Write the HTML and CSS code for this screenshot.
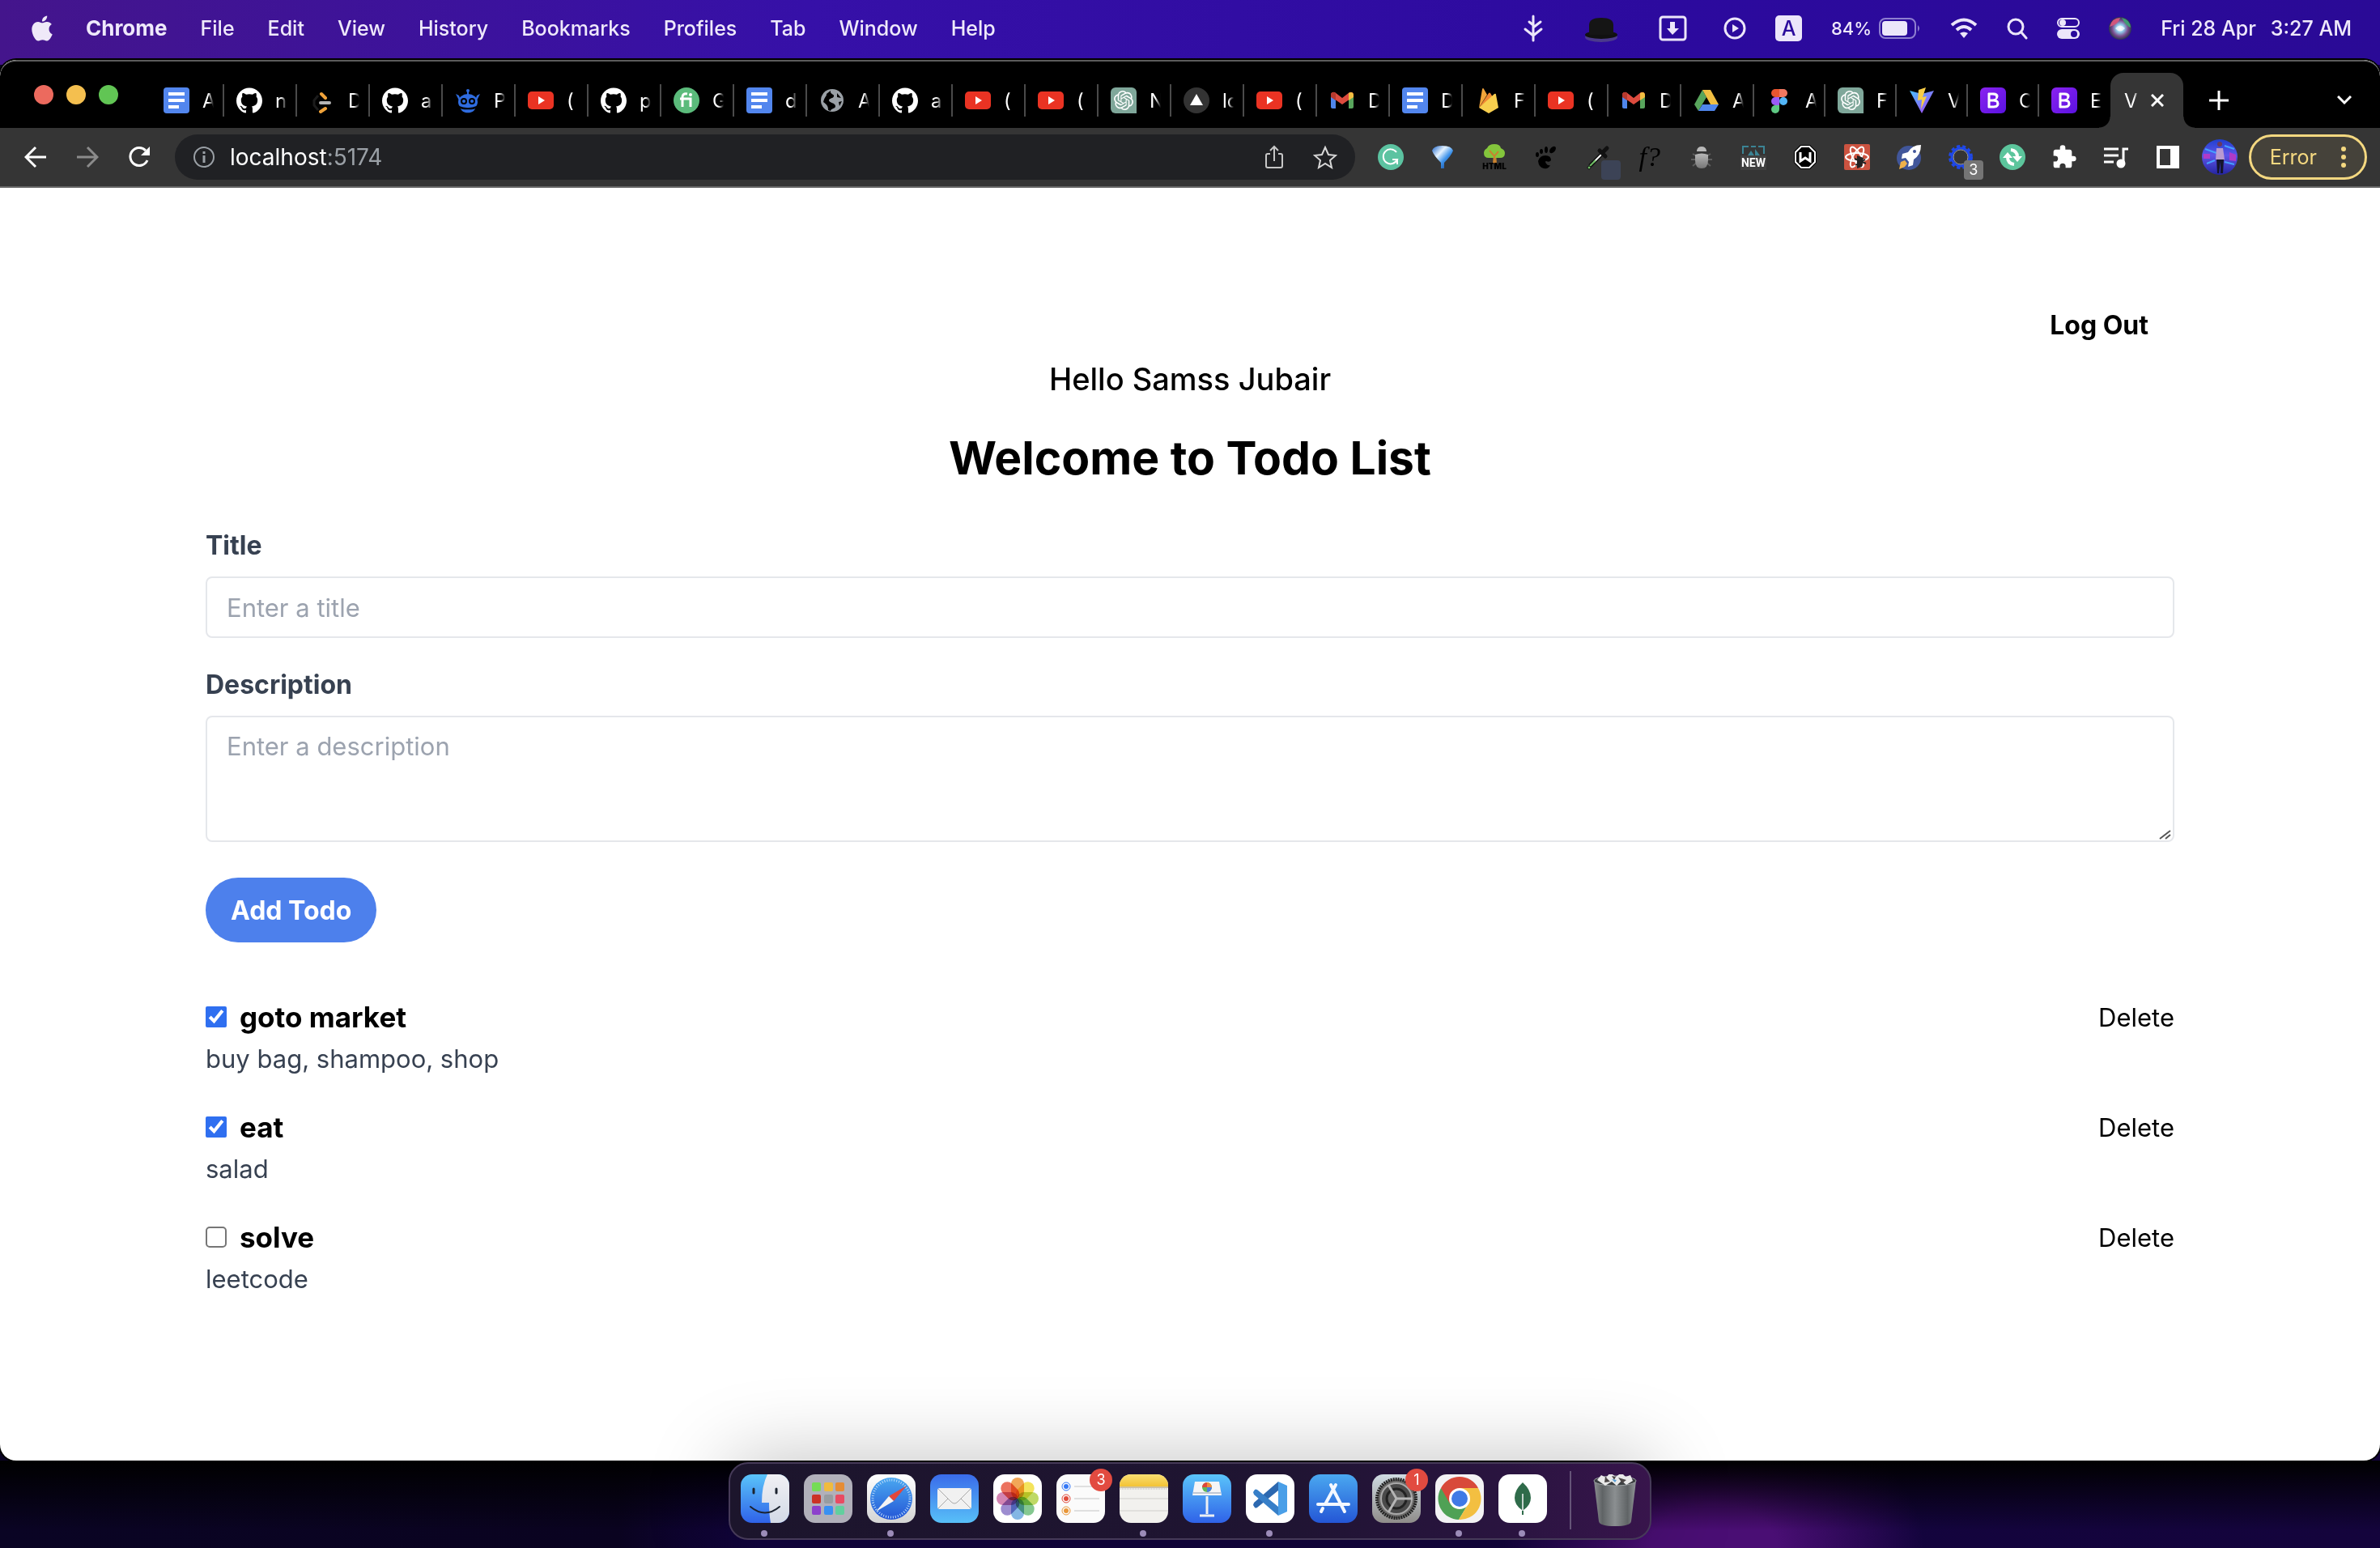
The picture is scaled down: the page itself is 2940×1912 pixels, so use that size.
FILE: index.html
```html
<!DOCTYPE html>
<html lang="en">
<head>
<meta charset="utf-8">
<title>Todo List</title>
<link rel="stylesheet" href="styles.css">
</head>
<body>
<svg class="sprite" aria-hidden="true">
  <defs>
    <linearGradient id="g-finder" x1="0" y1="0" x2="0" y2="1"><stop offset="0" stop-color="#5ac4fa"/><stop offset="1" stop-color="#2f62e8"/></linearGradient>
    <linearGradient id="g-blue" x1="0" y1="0" x2="0" y2="1"><stop offset="0" stop-color="#4aa8f0"/><stop offset="1" stop-color="#2456d6"/></linearGradient>
    <linearGradient id="g-mail" x1="0" y1="0" x2="0" y2="1"><stop offset="0" stop-color="#3a6bea"/><stop offset="1" stop-color="#58c0f8"/></linearGradient>
    <linearGradient id="g-silver" x1="0" y1="0" x2="0" y2="1"><stop offset="0" stop-color="#ffffff"/><stop offset="1" stop-color="#d4d4d4"/></linearGradient>
    <linearGradient id="g-face" x1="0" y1="0" x2="0" y2="1"><stop offset="0" stop-color="#f0f0f4"/><stop offset="1" stop-color="#d3dae6"/></linearGradient>
    <linearGradient id="g-yellow" x1="0" y1="0" x2="0" y2="1"><stop offset="0" stop-color="#f9de72"/><stop offset="1" stop-color="#f3c335"/></linearGradient>
    <linearGradient id="g-gear" x1="0" y1="0" x2="0" y2="1"><stop offset="0" stop-color="#cfdbe2"/><stop offset="1" stop-color="#8f8c8a"/></linearGradient>
    <linearGradient id="g-bin" x1="0" y1="0" x2="1" y2="0"><stop offset="0" stop-color="#8d9092"/><stop offset=".2" stop-color="#5f6365"/><stop offset=".5" stop-color="#8b8f91"/><stop offset=".8" stop-color="#606466"/><stop offset="1" stop-color="#93979a"/></linearGradient>
    <linearGradient id="g-boot" x1="0" y1="0" x2="1" y2="1"><stop offset="0" stop-color="#8a22f0"/><stop offset="1" stop-color="#5a12e0"/></linearGradient>
    <linearGradient id="g-vite" x1="0" y1="0" x2="1" y2="1"><stop offset="0" stop-color="#46c4ff"/><stop offset="1" stop-color="#b03cf6"/></linearGradient>
    <linearGradient id="g-balloon" x1="0" y1="0" x2="1" y2="1"><stop offset="0" stop-color="#1b63c8"/><stop offset=".35" stop-color="#e6f3ff"/><stop offset=".6" stop-color="#3d92ea"/><stop offset="1" stop-color="#0b2f78"/></linearGradient>
    <linearGradient id="g-bug" x1="0" y1="0" x2="0" y2="1"><stop offset="0" stop-color="#b8b8b8"/><stop offset="1" stop-color="#767676"/></linearGradient>
    <linearGradient id="g-avatar" x1="0" y1="0" x2="0" y2="1"><stop offset="0" stop-color="#1f3fd0"/><stop offset=".45" stop-color="#5e55e8"/><stop offset="1" stop-color="#2424a0"/></linearGradient>
    <radialGradient id="g-siri"><stop offset="0" stop-color="#ffffff"/><stop offset=".35" stop-color="#8fc9e8"/><stop offset=".7" stop-color="#7a4a8c"/><stop offset="1" stop-color="#2a3550"/></radialGradient>
  </defs>
  <symbol id="docs" viewBox="0 0 32 32"><rect width="32" height="32" rx="4" fill="#5286ee"/><path d="M6 6h20v4H6zM6 14h20v4H6zM6 22h13v4H6z" fill="#fff"/></symbol>
  <symbol id="github" viewBox="0 0 24 24"><path fill="#fff" d="M12 .297c-6.63 0-12 5.373-12 12 0 5.303 3.438 9.8 8.205 11.385.6.113.82-.258.82-.577 0-.285-.01-1.04-.015-2.04-3.338.724-4.042-1.61-4.042-1.61C4.422 18.07 3.633 17.7 3.633 17.7c-1.087-.744.084-.729.084-.729 1.205.084 1.838 1.236 1.838 1.236 1.07 1.835 2.809 1.305 3.495.998.108-.776.417-1.305.76-1.605-2.665-.3-5.466-1.332-5.466-5.93 0-1.31.465-2.38 1.235-3.22-.135-.303-.54-1.523.105-3.176 0 0 1.005-.322 3.3 1.23.96-.267 1.98-.399 3-.405 1.02.006 2.04.138 3 .405 2.28-1.552 3.285-1.23 3.285-1.23.645 1.653.24 2.873.12 3.176.765.84 1.23 1.91 1.23 3.22 0 4.61-2.805 5.625-5.475 5.92.42.36.81 1.096.81 2.22 0 1.606-.015 2.896-.015 3.286 0 .315.21.69.825.57C20.565 22.092 24 17.592 24 12.297c0-6.627-5.373-12-12-12"/></symbol>
  <symbol id="leetcode" viewBox="0 0 32 32"><path d="M15 8l5 5M14 30l6-4" stroke="#f0a33a" stroke-width="4" fill="none" stroke-linecap="round"/><path d="M11 10L6 16v6l5 6" stroke="#1c1c1c" stroke-width="3" fill="none"/><path d="M14 19h11" stroke="#b4b4b4" stroke-width="4" stroke-linecap="round"/></symbol>
  <symbol id="robot" viewBox="0 0 32 32"><g fill="#2f6ce0"><circle cx="16" cy="4" r="2"/><path d="M15 4h2v6h-2zM1 8l4 2 2 6H5zM31 8l-4 2-2 6h2z"/><ellipse cx="16" cy="18" rx="12" ry="10"/><path d="M7 26c4 2 14 2 18 0-2 7-16 7-18 0z"/></g><path d="M5 24c6 3 16 3 22 0" stroke="#000" stroke-width="2" fill="none"/><circle cx="11" cy="17" r="4"/><circle cx="21" cy="17" r="4"/><circle cx="11" cy="17" r="2" fill="#2f6ce0"/><circle cx="21" cy="17" r="2" fill="#2f6ce0"/></symbol>
  <symbol id="youtube" viewBox="0 0 32 32"><rect y="5" width="32" height="22" rx="5" fill="#ea3323"/><path d="M13 11l8 5-8 5z" fill="#fff"/></symbol>
  <symbol id="fi" viewBox="0 0 32 32"><circle cx="16" cy="16" r="16" fill="#5bbb7b"/><path d="M11 24V12q0-5 6-4M8 14h13v10" fill="none" stroke="#fff" stroke-width="3"/><circle cx="21" cy="9" r="2" fill="#fff"/></symbol>
  <symbol id="globe" viewBox="0 0 32 32"><circle cx="16" cy="16" r="14" fill="#9aa0a6"/><path d="M14 4c-1 5 5 4 4 7s-6 2-6 5 8 3 8 7-5 2-6 6l-3-1c0-5-1-6-6-10 2-8 4-6 4-10zM22 7l5 6-5-1zM24 18l4-1-3 6z" fill="#000"/></symbol>
  <symbol id="gpt" viewBox="0 0 32 32"><path d="M6 0h20a6 6 0 0 1 6 6v26H6a6 6 0 0 1-6-6V6a6 6 0 0 1 6-6z" fill="#7fa79a"/><path transform="translate(4 4)" fill="#fff" d="M22.2819 9.8211a5.9847 5.9847 0 0 0-.5157-4.9108 6.0462 6.0462 0 0 0-6.5098-2.9A6.0651 6.0651 0 0 0 4.9807 4.1818a5.9847 5.9847 0 0 0-3.9977 2.9 6.0462 6.0462 0 0 0 .7427 7.0966 5.98 5.98 0 0 0 .511 4.9107 6.051 6.051 0 0 0 6.5146 2.9001A5.9847 5.9847 0 0 0 13.2599 24a6.0557 6.0557 0 0 0 5.7718-4.2058 5.9894 5.9894 0 0 0 3.9977-2.9001 6.0557 6.0557 0 0 0-.7475-7.0729zm-9.022 12.6081a4.4755 4.4755 0 0 1-2.8764-1.0408l.1419-.0804 4.7783-2.7582a.7948.7948 0 0 0 .3927-.6813v-6.7369l2.02 1.1686a.071.071 0 0 1 .038.052v5.5826a4.504 4.504 0 0 1-4.4945 4.4944zm-9.6607-4.1254a4.4708 4.4708 0 0 1-.5346-3.0137l.142.0852 4.783 2.7582a.7712.7712 0 0 0 .7806 0l5.8428-3.3685v2.3324a.0804.0804 0 0 1-.0332.0615L9.74 19.9502a4.4992 4.4992 0 0 1-6.1408-1.6464zM2.3408 7.8956a4.485 4.485 0 0 1 2.3655-1.9728V11.6a.7664.7664 0 0 0 .3879.6765l5.8144 3.3543-2.0201 1.1685a.0757.0757 0 0 1-.071 0l-4.8303-2.7865A4.504 4.504 0 0 1 2.3408 7.872zm16.5963 3.8558L13.1038 8.364 15.1192 7.2a.0757.0757 0 0 1 .071 0l4.8303 2.7913a4.4944 4.4944 0 0 1-.6765 8.1042v-5.6772a.79.79 0 0 0-.407-.667zm2.0107-3.0231l-.142-.0852-4.7735-2.7818a.7759.7759 0 0 0-.7854 0L9.409 9.2297V6.8974a.0662.0662 0 0 1 .0284-.0615l4.8303-2.7866a4.4992 4.4992 0 0 1 6.6802 4.66zM8.3065 12.863l-2.02-1.1638a.0804.0804 0 0 1-.038-.0567V6.0742a4.4992 4.4992 0 0 1 7.3757-3.4537l-.142.0805L8.704 5.459a.7948.7948 0 0 0-.3927.6813zm1.0976-2.3654l2.602-1.4998 2.6069 1.4998v2.9994l-2.5974 1.4997-2.6067-1.4997Z"/></symbol>
  <symbol id="vercel" viewBox="0 0 32 32"><circle cx="16" cy="16" r="16" fill="#333"/><path d="M16 8l8 14H8z" fill="#fff"/></symbol>
  <symbol id="gmail" viewBox="0 0 32 32"><path d="M2 8v16q0 2 2 2h4V12z" fill="#4f86ec"/><path d="M30 8v16q0 2-2 2h-4V12z" fill="#58a55c"/><path d="M2 8q1-3 5-2l9 7 9-7q4-1 5 2l-1 4-13 9L3 12z" fill="#dd4b3e"/><path d="M24 7q5-3 6 2v3l-6 4z" fill="#f1bf42"/><path d="M8 7Q3 4 2 9v3l6 4z" fill="#b6392e"/></symbol>
  <symbol id="firebase" viewBox="0 0 32 32"><path d="M5 25L9 2q1-2 2 0l4 7z" fill="#f2a53a"/><path d="M5 25L17 7q1-1 2 0l3 5z" fill="#ef8733"/><path d="M5 25L24 8q2-1 2 1l3 16-12 7z" fill="#f8cf4e"/></symbol>
  <symbol id="drive" viewBox="0 0 32 32"><path d="M11 3L1 21l5 8 10-17z" fill="#58a55c"/><path d="M11 3h10l10 18H21z" fill="#f1bf42"/><path d="M6 29l5-8h20l-5 8z" fill="#4f86ec"/></symbol>
  <symbol id="figma" viewBox="0 0 32 32"><path d="M16 2h-5a5 5 0 0 0 0 10h5z" fill="#e8552f"/><path d="M16 2h5a5 5 0 0 1 0 10h-5z" fill="#f07860"/><path d="M16 12h-5a5 5 0 0 0 0 10h5z" fill="#9a5cf6"/><circle cx="21" cy="17" r="5" fill="#53b6f8"/><path d="M16 22h-5a5 5 0 1 0 5 5z" fill="#5ec983"/></symbol>
  <symbol id="vite" viewBox="0 0 32 32"><path d="M1 4l15 28L31 4 16 8z" fill="url(#g-vite)"/><path d="M21 0l-9 3-1 13 5-1-1 12 7-16-5 1z" fill="#f8cd46"/></symbol>
  <symbol id="bootstrap" viewBox="0 0 32 32"><rect width="32" height="32" rx="6" fill="url(#g-boot)"/><path d="M10 7h7q5 0 5 4 0 3-3 4 4 1 4 5 0 5-6 5h-7zM12 9v6h4q4 0 4-3t-4-3zM12 17v6h5q4 0 4-3t-4-3z" fill="#fff" fill-rule="evenodd" stroke="#fff"/></symbol>
</svg>

<div class="desktop">
  <header class="menubar">
    <nav class="menus" aria-label="Application menu">
      <button class="menu apple" aria-label="Apple"><svg width="26" height="32" viewBox="2 0 20 24" fill="#efe9f8"><path d="M12.152 6.896c-.948 0-2.415-1.078-3.96-1.04-2.04.027-3.91 1.183-4.961 3.014-2.117 3.675-.546 9.103 1.519 12.09 1.013 1.454 2.208 3.09 3.792 3.039 1.52-.065 2.09-.987 3.935-.987 1.831 0 2.35.987 3.96.948 1.637-.026 2.676-1.48 3.676-2.948 1.156-1.688 1.636-3.325 1.662-3.415-.039-.013-3.182-1.221-3.22-4.857-.026-3.04 2.48-4.494 2.597-4.559-1.429-2.09-3.623-2.324-4.39-2.376-2-.156-3.675 1.09-4.61 1.09zM15.53 3.83c.843-1.012 1.4-2.427 1.245-3.83-1.207.052-2.662.805-3.532 1.818-.78.896-1.454 2.338-1.273 3.714 1.338.104 2.715-.688 3.559-1.701"/></svg></button>
      <button class="menu app">Chrome</button>
      <button class="menu">File</button>
      <button class="menu">Edit</button>
      <button class="menu">View</button>
      <button class="menu">History</button>
      <button class="menu">Bookmarks</button>
      <button class="menu">Profiles</button>
      <button class="menu">Tab</button>
      <button class="menu">Window</button>
      <button class="menu">Help</button>
    </nav>
    <div class="status">
      <svg width="26" height="34" viewBox="0 0 26 34" fill="none" stroke="#ece6fa" stroke-width="3" stroke-linecap="round"><path d="M13 2v30M13 16l9-7M13 13L8 9M13 26l10-8M13 26L3 18"/></svg>
      <svg width="70" height="36" viewBox="0 0 70 36"><ellipse cx="35" cy="29" rx="20" ry="6" fill="#4b3a8c"/><ellipse cx="35" cy="26" rx="20" ry="5" fill="#111"/><path d="M20 26V14q0-9 15-9t15 9v12z" fill="#151515"/></svg>
      <svg width="44" height="34" viewBox="0 0 44 34" fill="none" stroke="#ece6fa" stroke-width="3"><rect x="2" y="3" width="31" height="28" rx="3"/><path d="M17 9v9" stroke-width="6"/><path d="M10 17h15l-8 8z" fill="#ece6fa" stroke="none"/></svg>
      <svg width="28" height="28" viewBox="0 0 28 28" fill="none" stroke="#ece6fa" stroke-width="3"><circle cx="14" cy="14" r="12"/><path d="M11 9l8 5-8 5z" fill="#ece6fa" stroke="none"/></svg>
      <span class="input-source">A</span>
      <span class="battery">84%
        <svg width="52" height="26" viewBox="0 0 52 26"><rect x="1" y="1" width="44" height="24" rx="7" fill="none" stroke="#8f7fd0" stroke-width="2"/><rect x="4" y="4" width="31" height="18" rx="4" fill="#ece6fa"/><path d="M48 9q4 4 0 8z" fill="#8f7fd0"/></svg></span>
      <svg width="34" height="26" viewBox="0 0 34 26" fill="none" stroke="#ece6fa" stroke-width="4"><path d="M2 9q15-13 30 0M8 15q9-8 18 0"/><path d="M17 25l-5-6q5-3 10 0z" fill="#ece6fa" stroke="none"/></svg>
      <svg width="26" height="28" viewBox="0 0 26 28" fill="none" stroke="#ece6fa" stroke-width="3" stroke-linecap="round"><circle cx="11" cy="12" r="9"/><path d="M18 19l6 7"/></svg>
      <svg width="28" height="28" viewBox="0 0 28 28"><rect x="1" y="2" width="26" height="10" rx="5" fill="none" stroke="#ece6fa" stroke-width="2"/><circle cx="7" cy="7" r="4" fill="#ece6fa"/><rect y="15" width="28" height="12" rx="6" fill="#ece6fa"/><circle cx="21" cy="21" r="4" fill="#2a0a9c"/></svg>
      <svg width="28" height="28" viewBox="0 0 28 28"><circle cx="14" cy="14" r="14" fill="url(#g-siri)"/><path d="M1 12Q4 1 14 1q-2 8-13 11z" fill="#d0567c"/><path d="M16 1q10 2 11 12-6-2-11-12z" fill="#3f9c74"/><path d="M8 14q6-7 12 0-6 7-12 0z" fill="#fff" opacity=".7"/></svg>
      <time class="clock"><span>Fri 28 Apr</span><span>3:27 AM</span></time>
    </div>
  </header>

  <section class="window">
    <div class="tabstrip">
      <div class="lights"><button class="light close" aria-label="Close window"></button><button class="light minimise" aria-label="Minimise"></button><button class="light zoom" aria-label="Zoom"></button></div>
      <div class="tabs">
        <button class="tab"><svg><use href="#docs"/></svg><span>A</span></button>
        <button class="tab"><svg><use href="#github"/></svg><span>n</span></button>
        <button class="tab"><svg><use href="#leetcode"/></svg><span>D</span></button>
        <button class="tab"><svg><use href="#github"/></svg><span>a</span></button>
        <button class="tab"><svg><use href="#robot"/></svg><span>P</span></button>
        <button class="tab"><svg><use href="#youtube"/></svg><span>(</span></button>
        <button class="tab"><svg><use href="#github"/></svg><span>p</span></button>
        <button class="tab"><svg><use href="#fi"/></svg><span>G</span></button>
        <button class="tab"><svg><use href="#docs"/></svg><span>d</span></button>
        <button class="tab"><svg><use href="#globe"/></svg><span>A</span></button>
        <button class="tab"><svg><use href="#github"/></svg><span>a</span></button>
        <button class="tab"><svg><use href="#youtube"/></svg><span>(</span></button>
        <button class="tab"><svg><use href="#youtube"/></svg><span>(</span></button>
        <button class="tab"><svg><use href="#gpt"/></svg><span>N</span></button>
        <button class="tab"><svg><use href="#vercel"/></svg><span>lo</span></button>
        <button class="tab"><svg><use href="#youtube"/></svg><span>(</span></button>
        <button class="tab"><svg><use href="#gmail"/></svg><span>D</span></button>
        <button class="tab"><svg><use href="#docs"/></svg><span>D</span></button>
        <button class="tab"><svg><use href="#firebase"/></svg><span>F</span></button>
        <button class="tab"><svg><use href="#youtube"/></svg><span>(</span></button>
        <button class="tab"><svg><use href="#gmail"/></svg><span>D</span></button>
        <button class="tab"><svg><use href="#drive"/></svg><span>A</span></button>
        <button class="tab narrow"><svg><use href="#figma"/></svg><span>A</span></button>
        <button class="tab narrow"><svg><use href="#gpt"/></svg><span>F</span></button>
        <button class="tab narrow"><svg><use href="#vite"/></svg><span>V</span></button>
        <button class="tab narrow"><svg><use href="#bootstrap"/></svg><span>C</span></button>
        <button class="tab narrow last"><svg><use href="#bootstrap"/></svg><span>E</span></button>
        <button class="tab active"><span>V</span><svg viewBox="0 0 16 16" stroke="#fff" stroke-width="3"><path d="M1 1l14 14M15 1L1 15"/></svg></button>
      </div>
      <button class="strip-button" aria-label="New tab"><svg width="24" height="24" viewBox="0 0 24 24" stroke="#fff" stroke-width="3"><path d="M12 0v24M0 12h24"/></svg></button>
      <button class="strip-button search" aria-label="Search tabs"><svg width="18" height="12" viewBox="0 0 18 12" fill="none" stroke="#fff" stroke-width="3"><path d="M1 1l8 8 8-8"/></svg></button>
    </div>

    <div class="toolbar">
      <button class="tool" aria-label="Back"><svg width="28" height="28" viewBox="0 0 28 28" fill="none" stroke="#fff" stroke-width="3"><path d="M27 14H3M14 2L2 14l12 12"/></svg></button>
      <button class="tool" aria-label="Forward"><svg width="28" height="28" viewBox="0 0 28 28" fill="none" stroke="#8b8b8b" stroke-width="3"><path d="M1 14h24M14 2l12 12-12 12"/></svg></button>
      <button class="tool" aria-label="Reload"><svg width="28" height="28" viewBox="0 0 28 28" fill="none" stroke="#fff" stroke-width="3"><path d="M24 18a11 11 0 1 1-2-12"/><path d="M27 1v11H16z" fill="#fff" stroke="none"/></svg></button>
      <div class="omnibox">
        <svg width="28" height="28" viewBox="0 0 28 28" fill="none" stroke="#9aa0a6" stroke-width="2"><circle cx="14" cy="14" r="12"/><path d="M14 12v9M14 7v3" stroke-width="3"/></svg>
        <p class="url">localhost<span>:5174</span></p>
        <button class="page-action" aria-label="Share"><svg width="24" height="30" viewBox="0 0 24 30" fill="none" stroke="#c7c7c7" stroke-width="2"><path d="M7 11H4q-2 0-2 2v13q0 2 2 2h16q2 0 2-2V13q0-2-2-2h-3M12 20V2M7 7l5-5 5 5"/></svg></button>
        <button class="page-action" aria-label="Bookmark"><svg width="30" height="30" viewBox="0 0 30 30" fill="none" stroke="#d8d8d8" stroke-width="2"><path d="M15 3l4 9 9 1-7 6 2 9-8-5-8 5 2-9-7-6 9-1z"/></svg></button>
      </div>
      <div class="extensions">
        <button class="ext" aria-label="Grammarly"><svg viewBox="0 0 32 32"><circle cx="16" cy="16" r="16" fill="#5cc3a1"/><path d="M23 10a9 9 0 1 0 1 9h-6M24 19v6" fill="none" stroke="#fff" stroke-width="2"/></svg></button>
        <button class="ext" aria-label="Balloon"><svg viewBox="0 0 32 32"><path d="M3 8Q5 2 16 2t13 6q-2 6-11 15v7h-4v-7Q5 14 3 8z" fill="url(#g-balloon)"/></svg></button>
        <button class="ext" aria-label="HTML tree"><svg viewBox="0 0 32 32"><path d="M15 12h3l1 12h-5z" fill="#c9822f"/><path d="M3 11q0-4 4-6 2-5 9-5t8 5q5 2 5 6 0 6-6 6H9q-6 0-6-6z" fill="#84c63c"/><path d="M10 8l6 7 5-6M16 13v10" stroke="#c9822f" stroke-width="2" fill="none"/><text x="16" y="31" class="t-html">HTML</text></svg></button>
        <button class="ext" aria-label="Footprint"><svg viewBox="0 0 32 32"><ellipse cx="24" cy="7" rx="3" ry="5" transform="rotate(40 24 7)"/><ellipse cx="16" cy="7" rx="2" ry="4"/><ellipse cx="10" cy="9" rx="2" ry="3"/><ellipse cx="5" cy="13" rx="2" ry="3"/><path d="M6 21q2-7 9-7t7 6q-2 3-6 1-2 0 0 3t5 2q-2 5-8 4t-7-9z"/></svg></button>
        <button class="ext" aria-label="Color picker"><svg viewBox="0 0 32 32"><path d="M21 12L6 27" stroke="#111" stroke-width="5"/><path d="M21 12L11 22" stroke="#fff" stroke-width="2"/><path d="M13 20L6 27" stroke="#6dbf63" stroke-width="2"/><path d="M18 8l7 7M22 10l5-5" stroke="#111" stroke-width="5" stroke-linecap="round"/><circle cx="5" cy="29" r="2" fill="#6dbf63" stroke="#111"/></svg><span class="badge blank"></span></button>
        <button class="ext" aria-label="What font"><em class="t-font">f?</em></button>
        <button class="ext" aria-label="Bug"><svg viewBox="0 0 32 32"><path d="M5 12l5 3M3 19h6M5 27l5-4M27 12l-5 3M29 19h-6M27 27l-5-4" stroke="#5e5e5e" stroke-width="2"/><path d="M10 8q1-5 6-5t6 5v1H10z" fill="#b8b8b8"/><path d="M8 13q8-3 16 0v7q0 10-8 10T8 20z" fill="url(#g-bug)"/></svg></button>
        <button class="ext" aria-label="Screenshot"><svg viewBox="0 0 32 32"><path d="M3 12V3h7M13 3h6M22 3h7v9" fill="none" stroke="#3b8494" stroke-width="2"/><path d="M9 14l4-6 4 6zM18 14V6l6 8z" fill="#3b8494"/><rect y="14" width="32" height="18" fill="#404040"/><text x="16" y="28" class="t-new">NEW</text></svg></button>
        <button class="ext" aria-label="Wappalyzer"><svg viewBox="0 0 32 32"><path d="M10 1h12l8 8v14l-8 8H10l-8-8V9z" fill="#000"/><path d="M11 3h10l7 7v12l-7 7H11l-7-7V10z" fill="none" stroke="#fff" stroke-width="2"/><path d="M10 10v11l6-4 6 4V10" fill="none" stroke="#fff" stroke-width="3"/></svg></button>
        <button class="ext" aria-label="React tools"><svg viewBox="0 0 32 32"><rect width="32" height="32" rx="2" fill="#cc5340"/><g fill="none" stroke="#fff" stroke-width="2"><ellipse cx="16" cy="16" rx="14" ry="5"/><ellipse cx="16" cy="16" rx="14" ry="5" transform="rotate(60 16 16)"/><ellipse cx="16" cy="16" rx="14" ry="5" transform="rotate(120 16 16)"/></g><path d="M16 14l8 3-2 11-6 2z" fill="#222"/><path d="M13 18l14 6M14 26l12-7" stroke="#222" stroke-width="2"/></svg></button>
        <button class="ext" aria-label="Rocket"><svg viewBox="0 0 32 32"><circle cx="16" cy="17" r="15" fill="#41569a"/><path d="M31 1q-11 0-16 9l-7 2-1 6 5-1 4 5-1 6 6-2 1-7Q31 13 31 1z" fill="#fff"/><path d="M4 31l2-9 5-2 3 4-3 4z" fill="#efb14a"/><circle cx="23" cy="9" r="2" fill="#41569a"/></svg></button>
        <button class="ext" aria-label="Gear"><svg viewBox="0 0 32 32" fill="none"><circle cx="16" cy="16" r="13" stroke="#1f48e8" stroke-width="4" stroke-dasharray="4 3"/><circle cx="16" cy="16" r="11" stroke="#1f48e8" stroke-width="3"/><circle cx="16" cy="16" r="9" stroke="#9a9a9a"/></svg><span class="badge">3</span></button>
        <button class="ext" aria-label="Sync"><svg viewBox="0 0 32 32"><circle cx="16" cy="16" r="16" fill="#5cc59c"/><path d="M18 25q-8-1-8-9M14 7q8 1 8 9" fill="none" stroke="#fff" stroke-width="4"/><path d="M4 17h12l-6-7zM28 15H16l6 7z" fill="#fff"/></svg></button>
        <button class="ext" aria-label="Extensions"><svg viewBox="0 0 24 24" fill="#fff"><path d="M20.500 11H19V7c0-1.100-.9-2-2-2h-4V3.500a2.500 2.500 0 0 0-5 0V5H4c-1.100 0-2 .9-2 2v3.800h1.500a2.700 2.700 0 0 1 0 5.400H2V20c0 1.100.9 2 2 2h3.800v-1.500a2.700 2.700 0 0 1 5.400 0V22H17c1.100 0 2-.9 2-2v-4h1.500a2.500 2.500 0 0 0 0-5z"/></svg></button>
        <button class="ext" aria-label="Media"><svg viewBox="0 0 32 32" fill="none" stroke="#fff" stroke-width="3"><path d="M1 6h18M1 14h18M1 22h12M25 24V6h6"/><circle cx="22" cy="24" r="4" fill="#fff"/></svg></button>
        <button class="ext" aria-label="Side panel"><svg viewBox="0 0 32 32"><path d="M2 2h28v28H2zM6 6v20h13V6z" fill="#fff" fill-rule="evenodd"/></svg></button>
        <button class="ext avatar" aria-label="Profile"><svg viewBox="0 0 44 44"><circle cx="22" cy="22" r="22" fill="url(#g-avatar)"/><path d="M4 12l14 5M28 8l12 4M6 30l10-4M28 28l12 3" stroke="#46a0ff" stroke-width="2"/><path d="M34 16l8 3v8l-8-1zM2 18h8v6H2z" fill="#b03ac8"/><circle cx="22" cy="6" r="3" fill="#6a3a5c"/><path d="M18 11h8l2 14H17z" fill="#b99ad0"/><path d="M18 25h9l-1 17h-3v-14l-2 14h-2z" fill="#15152c"/></svg></button>
      </div>
      <button class="error"><span>Error</span><svg width="6" height="28" viewBox="0 0 6 28" fill="#f4d880"><circle cx="3" cy="4" r="3"/><circle cx="3" cy="14" r="3"/><circle cx="3" cy="24" r="3"/></svg></button>
    </div>

    <main class="page">
      <div class="topline"><button class="logout">Log Out</button></div>
      <p class="hello">Hello Samss Jubair</p>
      <h1 class="heading">Welcome to Todo List</h1>
      <form class="form">
        <label class="label" for="title">Title</label>
        <input class="field" id="title" type="text" placeholder="Enter a title">
        <label class="label" for="description">Description</label>
        <div class="area">
          <textarea class="field" id="description" placeholder="Enter a description"></textarea>
          <svg class="grip" width="16" height="12" viewBox="0 0 16 12" stroke="#555" stroke-width="2"><path d="M1 11L14 1M8 11l6-5"/></svg>
        </div>
        <button class="add" type="button">Add Todo</button>
      </form>
      <ul class="todos">
        <li class="todo">
          <div class="todo-head"><input type="checkbox" id="t1" checked><label for="t1">goto market</label><button class="delete">Delete</button></div>
          <p>buy bag, shampoo, shop</p>
        </li>
        <li class="todo">
          <div class="todo-head"><input type="checkbox" id="t2" checked><label for="t2">eat</label><button class="delete">Delete</button></div>
          <p>salad</p>
        </li>
        <li class="todo">
          <div class="todo-head"><input type="checkbox" id="t3"><label for="t3">solve</label><button class="delete">Delete</button></div>
          <p>leetcode</p>
        </li>
      </ul>
    </main>
  </section>

  <footer class="dock-area">
    <nav class="dock" aria-label="Dock">
      <button class="app-icon running" aria-label="Finder"><svg viewBox="0 0 60 60"><rect width="60" height="60" rx="14" fill="url(#g-finder)"/><path d="M33 0h13a14 14 0 0 1 14 14v32a14 14 0 0 1-14 14h-9q-2-11-2-25h-9Q26 14 33 0z" fill="url(#g-face)"/><path d="M16 18v5M44 18v5" stroke="#1c2430" stroke-width="3" stroke-linecap="round"/><path d="M12 40q18 15 36 0" fill="none" stroke="#1c2430" stroke-width="2" stroke-linecap="round"/></svg></button>
      <button class="app-icon" aria-label="Launchpad"><svg viewBox="0 0 60 60"><rect width="60" height="60" rx="14" fill="#b1b0ba"/><g><rect x="10" y="10" width="11" height="11" rx="2" fill="#75dc55"/><rect x="25" y="10" width="11" height="11" rx="2" fill="#f0bb3e"/><rect x="39" y="10" width="11" height="11" rx="2" fill="#e58c36"/><rect x="10" y="25" width="11" height="11" rx="2" fill="#cb3225"/><rect x="25" y="25" width="11" height="11" rx="2" fill="#979ca0"/><rect x="39" y="25" width="11" height="11" rx="2" fill="#e94a62"/><rect x="10" y="39" width="11" height="11" rx="2" fill="#8d40cc"/><rect x="25" y="39" width="11" height="11" rx="2" fill="#3a90f2"/><rect x="39" y="39" width="11" height="11" rx="2" fill="#62cf9e"/></g></svg></button>
      <button class="app-icon running" aria-label="Safari"><svg viewBox="0 0 60 60"><rect width="60" height="60" rx="14" fill="url(#g-silver)"/><circle cx="30" cy="30" r="26" fill="url(#g-blue)"/><circle cx="30" cy="30" r="23" fill="none" stroke="#bcdcfa" stroke-width="3" stroke-dasharray="1 2"/><path d="M49 14L33 33l-6-6z" fill="#e2463c"/><path d="M11 46l16-19 6 6z" fill="#f4f4f4"/></svg></button>
      <button class="app-icon" aria-label="Mail"><svg viewBox="0 0 60 60"><rect width="60" height="60" rx="14" fill="url(#g-mail)"/><rect x="9" y="17" width="42" height="26" rx="3" fill="#f1f1f1"/><path d="M10 18l16 16q4 4 8 0l16-16M10 42l12-12M50 42L38 30" fill="none" stroke="#a9a9a9" stroke-width="1"/></svg></button>
      <button class="app-icon" aria-label="Photos"><svg viewBox="0 0 60 60"><rect width="60" height="60" rx="14" fill="#fff"/><g class="petals"><rect x="22" y="4" width="16" height="26" rx="8" fill="#f0983a"/><rect x="22" y="4" width="16" height="26" rx="8" fill="#f3df3f" transform="rotate(45 30 30)"/><rect x="22" y="4" width="16" height="26" rx="8" fill="#b4d24b" transform="rotate(90 30 30)"/><rect x="22" y="4" width="16" height="26" rx="8" fill="#6fbf7c" transform="rotate(135 30 30)"/><rect x="22" y="4" width="16" height="26" rx="8" fill="#6ea9e0" transform="rotate(180 30 30)"/><rect x="22" y="4" width="16" height="26" rx="8" fill="#8c79c8" transform="rotate(225 30 30)"/><rect x="22" y="4" width="16" height="26" rx="8" fill="#cc6fa6" transform="rotate(270 30 30)"/><rect x="22" y="4" width="16" height="26" rx="8" fill="#e95a44" transform="rotate(315 30 30)"/></g></svg></button>
      <button class="app-icon" aria-label="Reminders"><svg viewBox="0 0 60 60"><rect width="60" height="60" rx="14" fill="#fbfbfb"/><path d="M22 15h31M22 30h31M22 45h31" stroke="#c4c4c4"/><g fill="none"><circle cx="12" cy="15" r="5" stroke="#3478f6"/><circle cx="12" cy="30" r="5" stroke="#e04a3a"/><circle cx="12" cy="45" r="5" stroke="#e8973a"/></g><circle cx="12" cy="15" r="3" fill="#3478f6"/><circle cx="12" cy="30" r="3" fill="#e04a3a"/><circle cx="12" cy="45" r="3" fill="#e8973a"/></svg><span class="count">3</span></button>
      <button class="app-icon running" aria-label="Notes"><svg viewBox="0 0 60 60"><rect width="60" height="60" rx="14" fill="#f2f1ee"/><path d="M0 15v-1A14 14 0 0 1 14 0h32a14 14 0 0 1 14 14v1z" fill="url(#g-yellow)"/><path d="M0 16h60" stroke="#a8925a"/><path d="M1 18h58" stroke="#b5b5b5" stroke-dasharray="1 1"/><path d="M0 30h60M0 45h60" stroke="#d0cfcc"/></svg></button>
      <button class="app-icon" aria-label="Keynote"><svg viewBox="0 0 60 60"><rect width="60" height="60" rx="14" fill="url(#g-finder)"/><path d="M15 9h30l3 17H12z" fill="#f5f5f7"/><path d="M13 23h34" stroke="#8c9bb0"/><circle cx="30" cy="16" r="6" fill="#62b959"/><path d="M30 16v-6a6 6 0 0 1 6 6z" fill="#f08a3c"/><path d="M30 16v-6a6 6 0 0 0-6 6z" fill="#e0463c"/><path d="M30 16h6a6 6 0 0 1-6 6z" fill="#4a7de0"/><path d="M30 27v22M21 51h18" stroke="#eceff4" stroke-width="3"/></svg></button>
      <button class="app-icon running" aria-label="Visual Studio Code"><svg viewBox="0 0 60 60"><rect width="60" height="60" rx="14" fill="#fff"/><path d="M40 9l11 5v32l-11 5z" fill="#4a9fe8"/><path d="M40 9v11L14 41q-2 1-3 0l-2-3 1-3z" fill="#2c68b0"/><path d="M40 51V40L14 19q-2-1-3 0l-2 3 1 3z" fill="#377fc8"/></svg></button>
      <button class="app-icon" aria-label="App Store"><svg viewBox="0 0 60 60"><rect width="60" height="60" rx="14" fill="url(#g-blue)"/><g stroke="#f4f8ff" stroke-width="4" stroke-linecap="round"><path d="M27 13l17 33M33 13L20 37M11 37h38M17 42l-2 4"/></g></svg></button>
      <button class="app-icon" aria-label="System Settings"><svg viewBox="0 0 60 60"><rect width="60" height="60" rx="14" fill="url(#g-gear)"/><circle cx="30" cy="30" r="24" fill="#6c6b6a" stroke="#222" stroke-width="4" stroke-dasharray="2 1"/><circle cx="30" cy="30" r="19" fill="#4a4a4a" stroke="#a9a9a9" stroke-width="2"/><circle cx="30" cy="30" r="12" fill="#5e5e5e" stroke="#222" stroke-width="3"/><path d="M30 30h20M30 30L20 13M30 30L20 47" stroke="#b5b5b5" stroke-width="3"/></svg><span class="count">1</span></button>
      <button class="app-icon running" aria-label="Google Chrome"><svg viewBox="0 0 60 60"><rect width="60" height="60" rx="14" fill="#f3f2f4"/><path d="M30 30L7 17a26 26 0 0 0 22 39l12-20z" fill="#4fa155"/><path d="M30 17h23a26 26 0 0 1-24 39l12-20z" fill="#f3bf41"/><path d="M7 17a26 26 0 0 1 46 0H30L18 36z" fill="#d8493a"/><circle cx="30" cy="30" r="13" fill="#fff"/><circle cx="30" cy="30" r="10" fill="#3f79e6"/></svg></button>
      <button class="app-icon running" aria-label="MongoDB Compass"><svg viewBox="0 0 60 60"><rect width="60" height="60" rx="14" fill="#fff"/><path d="M30 10q10 9 10 19 0 9-9 15v6h-2v-6q-9-6-9-15 0-10 10-19z" fill="#2f6b4a"/><path d="M30 24v21" stroke="#c4d4cc" stroke-width="2"/></svg></button>
      <span class="divider"></span>
      <button class="app-icon" aria-label="Bin"><svg class="bin" viewBox="0 0 60 74"><path d="M4 8l6 50q1 6 20 6t20-6l6-50z" fill="url(#g-bin)"/><ellipse cx="30" cy="8" rx="26" ry="6" fill="#3c4042" stroke="#9da1a4"/><path d="M8 7l5-6 6 3 5-6 7 5 7-5 5 5 6-2 3 7-8 5-6-5-6 6-6-5-8 5z" fill="#e9e9e9"/><path d="M18 3l6 6-7 1zM34 4l5 7 5-4zM26 2l3 5 2-4z" fill="#4b4646"/><path d="M26 6l4 4 2-3z" fill="#5aa0d8"/></svg></button>
    </nav>
  </footer>
</div>
</body>
</html>
```
FILE: styles.css
```css
* { box-sizing: border-box; }

body {
  margin: 0;
  font-family: Inter, "Liberation Sans", sans-serif;
  color: #000;
}

button {
  margin: 0;
  padding: 0;
  border: 0;
  background: none;
  color: inherit;
  font: inherit;
}

svg { display: block; flex: none; }

.sprite { position: absolute; width: 0; height: 0; }

.desktop {
  display: flex;
  flex-direction: column;
  min-height: 100vh;
  background:
    linear-gradient(90deg, #44158c, #3610a8 34%, #2c0a9e 70%, #2a0a96) top / 100% 80px no-repeat,
    linear-gradient(#000, #0000 80%) bottom / 100% 108px no-repeat,
    radial-gradient(ellipse 260px 180px at 72% 100%, #4a0e74 30%, #4a0e7400) bottom / 100% 160px no-repeat,
    linear-gradient(90deg, #0a0424, #0a0320 26%, #120440 32%, #14043c);
}

/* Menu bar */
.menubar {
  display: flex;
  justify-content: space-between;
  align-items: center;
  height: 72px;
  padding: 0 35px 2px 39px;
  color: #efe9fb;
  font-size: 25px;
  font-weight: 500;
  line-height: 32px;
}

.menus { display: flex; align-items: center; gap: 41px; }
.menu { white-space: nowrap; }
.app { font-size: 26px; font-weight: 700; }
.status { display: flex; align-items: center; gap: 36px; }

.input-source {
  width: 33px;
  border-radius: 5px;
  background: #ece6fa;
  color: #2a0a9c;
  text-align: center;
}

.battery { display: flex; align-items: center; gap: 9px; font-size: 22px; }
.clock { display: flex; gap: 18px; white-space: nowrap; }

/* Browser window */
.window {
  display: flex;
  flex: 1;
  flex-direction: column;
  margin-top: 2px;
  overflow: hidden;
  border-radius: 20px;
  background: #fff;
  box-shadow: 0 0 0 2px #000;
}

.tabstrip {
  display: flex;
  align-items: flex-end;
  height: 84px;
  padding-right: 35px;
  border-top: 2px solid #5c5c5c;
  border-radius: 20px 20px 0 0;
  background: #000;
}

.lights { display: flex; flex: none; gap: 16px; width: 187px; padding: 0 0 29px 42px; }
.light { width: 24px; height: 24px; border-radius: 50%; }
.close { background: #ec6a5e; }
.minimise { background: #f4bf4f; }
.zoom { background: #61c554; }

.tabs { display: flex; align-items: flex-end; }

.tab {
  position: relative;
  display: flex;
  align-items: center;
  gap: 16px;
  width: 90px;
  height: 68px;
  padding-left: 15px;
  color: #fff;
  font-size: 24px;
}

.tab svg { width: 32px; height: 32px; }
.narrow { width: 88px; }

/* Titles fade out at the tab's edge */
.tab span {
  flex: none;
  width: 20px;
  text-align: left;
  white-space: nowrap;
  -webkit-mask-image: linear-gradient(90deg, #000 7px, #0000 14px);
  mask-image: linear-gradient(90deg, #000 7px, #0000 14px);
}

/* Hairline between neighbouring tabs */
.tab::after {
  content: "";
  position: absolute;
  top: 14px;
  right: 0;
  width: 2px;
  height: 40px;
  background: #4a4a4a;
}

.tab.last::after { display: none; }

.tab.active {
  gap: 13px;
  padding-left: 17px;
  border-radius: 16px 16px 0 0;
  background: #353535;
}

.tab.active span {
  -webkit-mask-image: linear-gradient(90deg, #000 12px, #0000 18px);
  mask-image: linear-gradient(90deg, #000 12px, #0000 18px);
}

.tab.active svg { width: 16px; height: 16px; }

.tab.active::before,
.tab.active::after {
  content: "";
  position: absolute;
  top: auto;
  bottom: 0;
  width: 14px;
  height: 14px;
}

.tab.active::before { left: -14px; background: radial-gradient(circle at 0 0, #0000 13px, #353535 14px); }
.tab.active::after { right: -14px; background: radial-gradient(circle at 100% 0, #0000 13px, #353535 14px); }

.strip-button { display: flex; align-items: center; height: 68px; margin-left: 32px; }
.search { margin-left: auto; }

.toolbar {
  display: flex;
  align-items: center;
  height: 74px;
  padding: 0 16px 0 12px;
  border-bottom: 2px solid #666;
  background: #353535;
}

.tool { display: flex; justify-content: center; width: 64px; }

.omnibox {
  display: flex;
  flex: 1;
  align-items: center;
  height: 56px;
  margin: 0 12px;
  padding: 0 22px;
  border-radius: 28px;
  background: #202124;
  font-size: 28px;
}

.url { flex: 1; margin: 0 0 0 18px; color: #fff; }
.url span { color: #9aa0a6; }
.page-action { margin-left: 36px; }
.extensions { display: flex; }

.ext {
  position: relative;
  display: flex;
  justify-content: center;
  align-items: center;
  width: 64px;
  height: 56px;
}

.ext svg { width: 32px; height: 32px; }
.ext.avatar svg { width: 44px; height: 44px; }

.badge {
  position: absolute;
  right: 4px;
  bottom: 0;
  width: 24px;
  height: 24px;
  border-radius: 4px;
  background: #757575;
  color: #fff;
  font-size: 18px;
  line-height: 24px;
}

.blank { background: #3c4356; }

.t-html { font: 900 10px Inter, sans-serif; text-anchor: middle; }
.t-font { font: italic 34px/40px "Liberation Serif", serif; color: #000; }
.t-new { font: 700 14px Roboto, sans-serif; text-anchor: middle; fill: #fff; }

.error {
  display: flex;
  align-items: center;
  gap: 30px;
  height: 56px;
  margin-left: 4px;
  padding: 0 23px;
  border: 3px solid #f4d880;
  border-radius: 28px;
  background: #45423a;
  color: #f4d880;
  font-size: 25px;
}

/* Todo page */
.page {
  width: 100%;
  max-width: 2560px;
  margin: 0 auto;
  padding: 146px 64px 64px;
  font-size: 31px;
  line-height: 48px;
}

.topline { display: flex; justify-content: flex-end; }
.logout { padding: 0 32px; font-size: 32px; font-weight: 700; }

.hello {
  margin: 14px 0 0;
  font-size: 38px;
  font-weight: 500;
  line-height: 56px;
  text-align: center;
}

.heading {
  margin: 34px 0 0;
  font-size: 57px;
  font-weight: 700;
  line-height: 72px;
  text-align: center;
}

.form { display: flex; flex-direction: column; align-items: flex-start; }
.label { margin-top: 34px; color: #374151; font-size: 32px; font-weight: 700; }
.label:first-child { margin-top: 48px; }

.field {
  display: block;
  width: 100%;
  height: 76px;
  margin: 14px 0 0;
  padding: 12px 24px;
  border: 2px solid #e5e7eb;
  border-radius: 8px;
  background: #fff;
  font: inherit;
}

.field::placeholder { color: #9ca3af; opacity: 1; }
.area { position: relative; width: 100%; }
.area .field { height: 156px; resize: none; }
.grip { position: absolute; right: 3px; bottom: 3px; }

.add {
  height: 80px;
  margin-top: 44px;
  padding: 2px 31px 0;
  border-radius: 40px;
  background: #4d80ec;
  color: #fff;
  font-size: 32px;
  font-weight: 700;
}

.todos { margin: 64px 0 0; padding: 0; list-style: none; }
.todo { margin-bottom: 32px; }
.todo-head { display: flex; align-items: center; height: 56px; }

.todo-head input {
  width: 26px;
  height: 26px;
  margin: 0 16px 0 0;
  accent-color: #2f6ff0;
}

.todo-head input:not(:checked) {
  appearance: none;
  border: 2px solid #767676;
  border-radius: 5px;
  background: #fff;
}

.todo-head label { font-size: 35px; font-weight: 700; }
.delete { margin-left: auto; padding-top: 2px; }
.todo p { margin: 0; color: #374151; }

/* Dock */
.dock-area {
  display: flex;
  justify-content: center;
  height: 108px;
  padding: 2px 0 10px;
}

.dock {
  position: relative;
  display: flex;
  gap: 18px;
  padding: 13px;
  border: 2px solid #463a58;
  border-radius: 24px;
  background: linear-gradient(90deg, #1c152c, #1f1432 60%, #2a1440 85%, #38154c);
  box-shadow: 0 0 100px #00000044;
}

.app-icon { position: relative; width: 60px; height: 60px; }
.app-icon svg { width: 60px; height: 60px; }
.app-icon .bin { height: 74px; }
.petals { mix-blend-mode: multiply; }
.petals rect { mix-blend-mode: multiply; opacity: .85; }

.running::after {
  content: "";
  position: absolute;
  bottom: -17px;
  left: 25px;
  width: 8px;
  height: 8px;
  border-radius: 50%;
  background: #9c8cb8;
}

.count {
  position: absolute;
  top: -7px;
  right: -9px;
  width: 28px;
  height: 28px;
  border-radius: 50%;
  background: #e24b40;
  color: #fff;
  font-size: 18px;
  line-height: 28px;
}

.divider { width: 2px; height: 72px; margin: -4px 6px 0 10px; background: #655478; }
```
